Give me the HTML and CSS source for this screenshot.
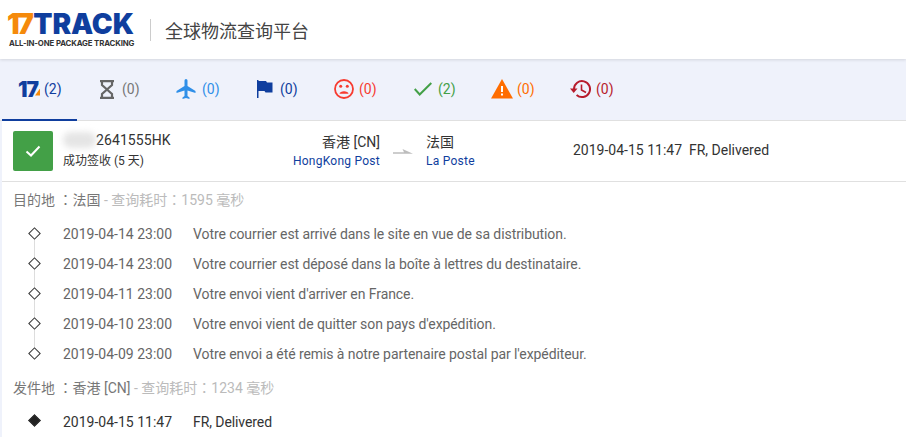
FILE: index.html
```html
<!DOCTYPE html>
<html lang="zh">
<head>
<meta charset="utf-8">
<title>17TRACK</title>
<link rel="stylesheet" href="styles.css">
</head>
<body>
<header class="top">
  <div class="logo">
    <div class="logo-main"><span class="l17">17</span><span class="ltrack">TRACK</span></div>
    <div class="logo-sub">ALL-IN-ONE PACKAGE TRACKING</div>
  </div>
  <div class="sep"></div>
  <div class="title">全球物流查询平台</div>
</header>
<nav class="tabs">
  <div class="tab active w1"><span class="mini17">17<i></i></span><span class="c-blue">(2)</span></div>
  <div class="tab w2"><svg width="14" height="19" viewBox="0 0 14 19"><path d="M0 1.200h14M0 17.800h14M2 1.500v3.500L7 9.500l-5 4.500v3.500M12 1.500v3.500L7 9.500l5 4.500v3.500" fill="none" stroke="#666" stroke-width="2.200"/></svg><span class="c-gray">(0)</span></div>
  <div class="tab w3"><svg width="20" height="20" viewBox="2 2 20 20"><path fill="#2f8fe8" d="M21.500 16v-2l-8-5V3.500a1.500 1.500 0 0 0-3 0V9l-8 5v2l8-2.500V19l-2 1.500V22l3.500-1 3.500 1v-1.500l-2-1.500v-5.500z"/></svg><span class="c-sky">(0)</span></div>
  <div class="tab w4"><svg width="16" height="18" viewBox="0 0 16 18"><path fill="#0f3e9e" d="M0 0h1.500v18H0zM1.500 1H9l1 1.500h5.500v10H8.500l-1-1.500h-6z"/></svg><span class="c-navy">(0)</span></div>
  <div class="tab w5"><svg width="20" height="20" viewBox="0 0 20 20"><circle cx="10" cy="10" r="9" fill="none" stroke="#f73b30" stroke-width="1.800"/><circle cx="6.700" cy="7.300" r="1.500" fill="#f73b30"/><circle cx="13.300" cy="7.300" r="1.500" fill="#f73b30"/><path d="M5.500 14.800c0-3.400 9-3.400 9 0z" fill="#f73b30"/></svg><span class="c-red">(0)</span></div>
  <div class="tab w6"><svg width="18" height="14" viewBox="0 0 18 14"><path d="M.7 7l5 5.500L17.300 1" fill="none" stroke="#43a047" stroke-width="2"/></svg><span class="c-green">(2)</span></div>
  <div class="tab w7"><svg width="22" height="20" viewBox="0 0 22 20"><path fill="#ff6d00" d="M11 0l11 19.500H0z"/><path fill="#fff" d="M10 7h2v6h-2zM10 14.500h2v2h-2z"/></svg><span class="c-orange">(0)</span></div>
  <div class="tab w8"><svg width="21" height="20" viewBox="0 0 21 20"><path d="M4 10a8 8 0 1 1 2.600 6" fill="none" stroke="#b71c2c" stroke-width="2"/><path fill="#b71c2c" d="M0 9.500h7.500L3.700 14z"/><path d="M11.500 5.500V11l4.500 2.500" fill="none" stroke="#b71c2c" stroke-width="1.600"/></svg><span class="c-maroon">(0)</span></div>
</nav>
<main class="content">
  <section class="summary">
    <div class="status"><svg width="16" height="12" viewBox="0 0 16 12"><path d="M1.500 6.500l4.500 4L14.500 1.500" fill="none" stroke="#fff" stroke-width="2"/></svg></div>
    <div class="num">
      <div class="num-code"><span class="blur"></span>2641555HK</div>
      <div class="num-state">成功签收 (5 天)</div>
    </div>
    <div class="origin">
      <div class="place">香港 [CN]</div>
      <div class="carrier">HongKong Post</div>
    </div>
    <svg class="arrow" width="20" height="6" viewBox="0 0 20 6"><path fill="#bdbdbd" d="M0 3.200h11L9.500 0 20 4.800H0z"/></svg>
    <div class="dest">
      <div class="place">法国</div>
      <div class="carrier">La Poste</div>
    </div>
    <div class="latest">2019-04-15 11:47&nbsp; FR, Delivered</div>
  </section>
  <section class="details">
    <div class="head" lang="zh-TW">目的地 ：法国 <span class="muted">- 查询耗时：1595 毫秒</span></div>
    <ul class="events">
      <li><span class="dot"></span><time>2019-04-14 23:00</time><span class="msg">Votre courrier est arrivé dans le site en vue de sa distribution.</span></li>
      <li><span class="dot"></span><time>2019-04-14 23:00</time><span class="msg">Votre courrier est déposé dans la boîte à lettres du destinataire.</span></li>
      <li><span class="dot"></span><time>2019-04-11 23:00</time><span class="msg">Votre envoi vient d'arriver en France.</span></li>
      <li><span class="dot"></span><time>2019-04-10 23:00</time><span class="msg">Votre envoi vient de quitter son pays d'expédition.</span></li>
      <li><span class="dot"></span><time>2019-04-09 23:00</time><span class="msg">Votre envoi a été remis à notre partenaire postal par l'expéditeur.</span></li>
    </ul>
    <div class="head head2" lang="zh-TW">发件地 ：香港 [CN] <span class="muted">- 查询耗时：1234 毫秒</span></div>
    <ul class="events first">
      <li><span class="dot solid"></span><time>2019-04-15 11:47</time><span class="msg">FR, Delivered</span></li>
    </ul>
  </section>
</main>
</body>
</html>
```
FILE: styles.css
```css
* { box-sizing: border-box; }
html, body { margin: 0; padding: 0; }
body { width: 906px; height: 438px; overflow: hidden; background: #fff; font-family: Roboto, "Noto Sans CJK SC", sans-serif; font-size: 14px; color: #333; }
ul { list-style: none; margin: 0; padding: 0; }
.top { height: 59px; display: flex; align-items: center; padding-left: 8px; background: #fff; box-shadow: 0 1px 3px rgba(0,0,0,.12); position: relative; }
.logo { width: 128px; padding-top: 1px; }
.logo-main { height: 24px; display: flex; align-items: center; font-family: Inter, Roboto, sans-serif; font-weight: 900; font-size: 28px; line-height: 24px; }
.l17 { color: #f58a0b; letter-spacing: -2.500px; margin-left: -1px; }
.ltrack { color: #0f3e9e; letter-spacing: -.1px; margin-left: 2px; }
.logo-sub { font-family: Inter, Roboto, sans-serif; font-weight: 700; font-size: 7.800px; line-height: 10px; margin-top: 2px; margin-left: 1px; color: #333; white-space: nowrap; letter-spacing: -.12px; }
.sep { width: 1px; height: 22px; margin-left: 14px; background: #ccc; }
.title { margin-left: 14px; font-size: 18px; color: #444; font-family: "Noto Sans CJK SC", sans-serif; }
.tabs { height: 62px; padding-left: 2px; background: #eff2fb; display: flex; align-items: flex-start; border-bottom: 1px solid #e0e0e0; }
.tab { display: flex; align-items: center; padding-left: 16px; gap: 6px; font-size: 14px; height: 60px; position: relative; }
.tab.active::after { content: ""; position: absolute; left: 0; top: 60px; width: 75px; height: 2px; background: #0f3e9e; }
.w1 { width: 82px; gap: 4px; } .w2 { width: 76px; gap: 8px; } .w3 { width: 81px; } .w4 { width: 77px; gap: 7px; }
.w5 { width: 80px; gap: 5px; } .w6 { width: 77px; } .w7 { width: 79px; gap: 4px; } .w8 { width: 80px; gap: 5px; }
.mini17 { font-family: Inter, Roboto, sans-serif; font-weight: 900; font-size: 21px; color: #0f3e9e; letter-spacing: -1px; position: relative; width: 22px; }
.mini17 i { position: absolute; right: 0; bottom: 6px; width: 5px; height: 7px; background: #f58a0b; clip-path: polygon(100% 0, 100% 100%, 0 100%); }
.c-blue { color: #0f3e9e; } .c-gray { color: #777; } .c-sky { color: #2f8fe8; } .c-navy { color: #0f3e9e; }
.c-red { color: #f73b30; } .c-green { color: #43a047; } .c-orange { color: #ff6d00; } .c-maroon { color: #b71c2c; }
.content { border-left: 2px solid #eff2fb; }
.summary { height: 61px; border-bottom: 1px solid #e0e0e0; display: flex; align-items: center; position: relative; }
.status { width: 40px; height: 40px; margin-left: 11px; background: #43a047; border-radius: 2px; display: flex; align-items: center; justify-content: center; }
.num { margin-left: 10px; width: 197px; }
.num-code { font-size: 14px; line-height: 20px; color: #333; position: relative; padding-left: 33px; letter-spacing: .1px; margin-top: -1px; margin-bottom: 1px; }
.blur { position: absolute; left: 0; top: 2px; width: 33px; height: 16px; background: #e5e5e5; border-radius: 8px; filter: blur(3px); }
.num-state { font-size: 12px; line-height: 20px; color: #333; }
.origin { width: 120px; text-align: right; white-space: nowrap; }
.dest { width: 147px; margin-left: 13px; }
.place { font-size: 14px; line-height: 20px; color: #333; }
.carrier { font-size: 12px; line-height: 18px; color: #0f3e9e; letter-spacing: .25px; }
.arrow { margin-left: 13px; margin-top: 2px; }
.latest { font-size: 14px; color: #333; padding-bottom: 2px; }
.details { padding-left: 11px; }
.head { font-size: 14px; line-height: 20px; color: #777; padding-top: 8px; height: 37px; font-family: Roboto, "Noto Sans CJK TC", sans-serif; }
.head .muted { color: #bbb; }
.head2 { height: 38px; padding-top: 9px; }
.events li { height: 30px; display: flex; align-items: center; font-size: 14px; color: #666; position: relative; padding-left: 50px; }
.events time { width: 130px; }
.msg { letter-spacing: -.08px; }
.dot { position: absolute; left: 17px; top: 10px; width: 9px; height: 9px; transform: rotate(45deg); border: 1px solid #333; background: #fff; z-index: 1; }
.dot.solid { background: #222; top: 9px; }
.events li:not(:last-child)::after { content: ""; position: absolute; left: 21px; top: 19px; width: 1px; height: 20px; background: #ddd; }
.first li { color: #333; }
```
